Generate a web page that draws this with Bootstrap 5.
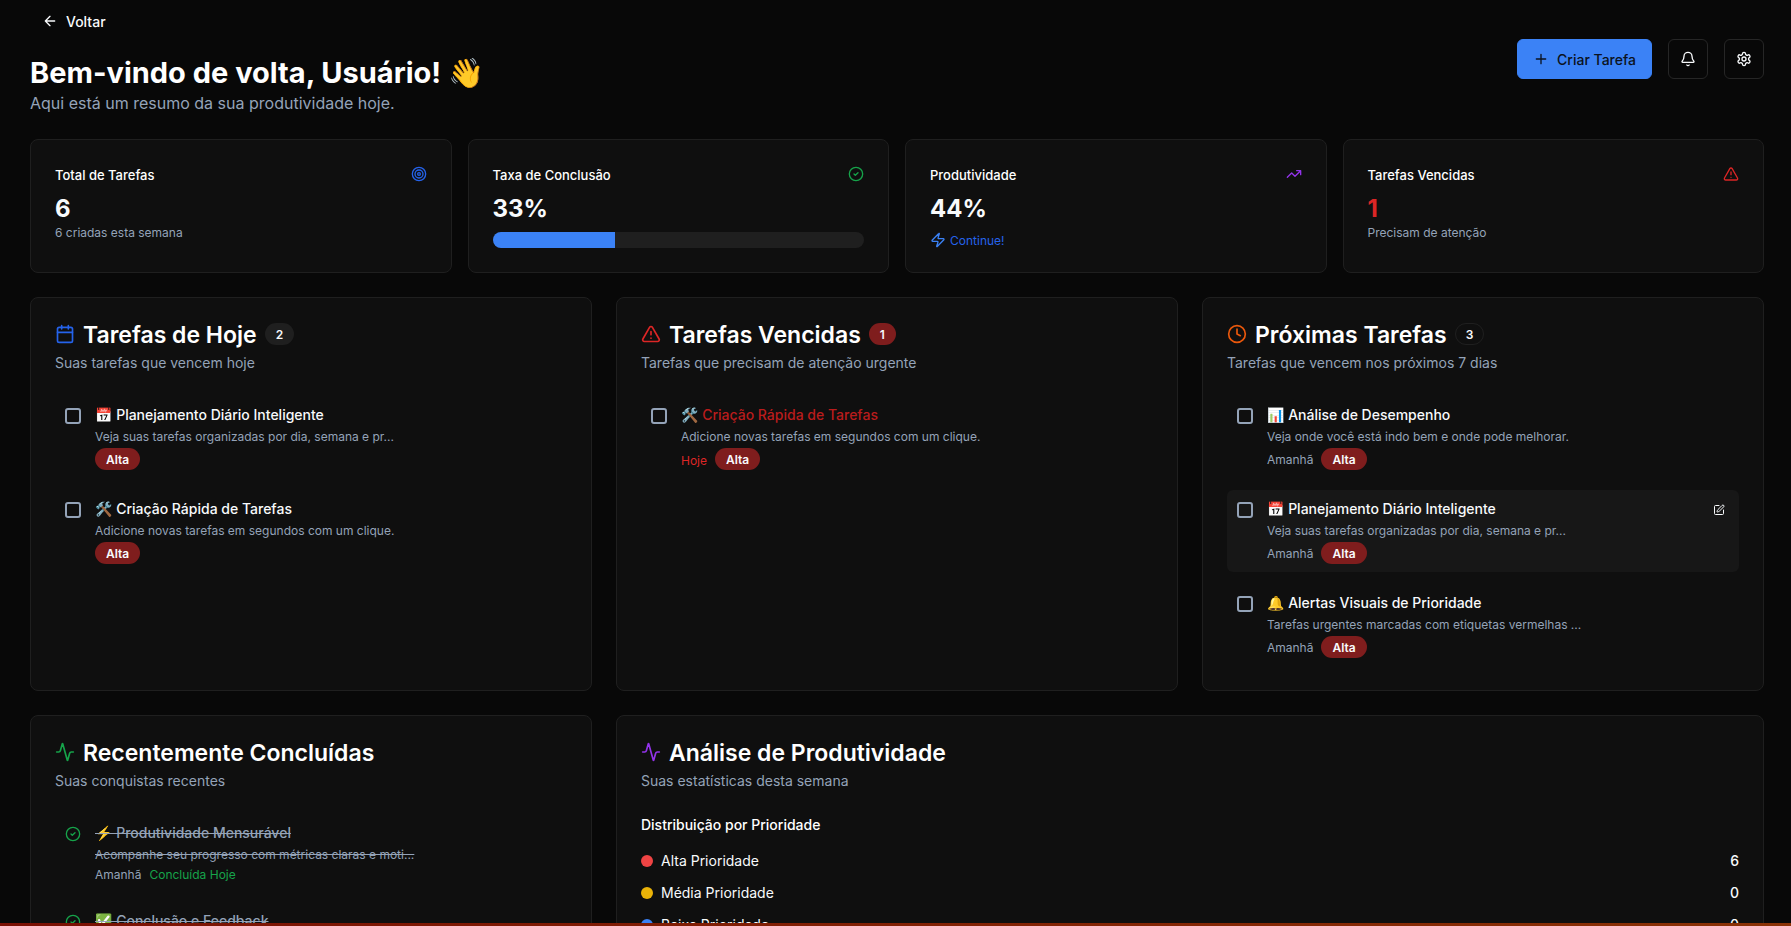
<!DOCTYPE html>
<html lang="pt-BR" data-bs-theme="dark">
<head>
<meta charset="utf-8">
<meta name="viewport" content="width=device-width, initial-scale=1">
<title>Painel de produtividade</title>
<link href="https://cdn.jsdelivr.net/npm/bootstrap@5.3.0/dist/css/bootstrap.min.css" rel="stylesheet">
<style>
  :root {
    --ink: #f8fafc; --muted: #94a3b8; --panel: #0f0f0f; --line: #1f1f1f;
    --blue: #2563eb; --green: #16a34a; --purple: #9333ea; --red: #dc2626; --orange: #ea580c;
  }
  body {
    font-family: Inter, "Noto Color Emoji", sans-serif;
    font-size: 14px; line-height: 22px;
    color: var(--ink); background: #080808;
    height: 100vh; overflow: hidden;
  }
  .page { padding: 3px 27px 24px 30px; }
  .ico { width: 16px; height: 16px; flex: none; fill: none; stroke: currentColor; stroke-width: 2; stroke-linecap: round; stroke-linejoin: round; }
  .ico-lg { width: 20px; height: 20px; }
  .ico-sm { width: 12px; height: 12px; }
  .tone-muted { color: var(--muted); }
  .tone-blue { color: var(--blue); }
  .tone-sky { color: #3b82f6; }
  .tone-green { color: var(--green); }
  .tone-purple { color: var(--purple); }
  .tone-red { color: var(--red); }
  .tone-orange { color: var(--orange); }
  .tone-late { color: #b91c1c; }

  .btn { --bs-btn-font-size: 14px; --bs-btn-line-height: 20px; --bs-btn-border-radius: 6px; --bs-btn-font-weight: 500; }
  .btn-back, .btn-create { padding-top: 8px; padding-bottom: 6px; }
  .btn-back .ico, .btn-create .ico { margin-bottom: 2px; }
  .btn-back { --bs-btn-color: var(--ink); --bs-btn-padding-x: 11px; height: 36px; }
  .btn-create { --bs-btn-bg: #3b82f6; --bs-btn-border-color: #3b82f6; --bs-btn-color: #0b1220; --bs-btn-padding-x: 15px; height: 40px; }
  .btn-square { --bs-btn-color: var(--ink); --bs-btn-border-color: #262626; --bs-btn-padding-x: 0; width: 40px; height: 40px; }
  .btn-edit { --bs-btn-color: var(--ink); --bs-btn-padding-x: 0; --bs-btn-padding-y: 0; width: 24px; height: 24px; }

  h1 { font-size: 29px; line-height: 36px; font-weight: 700; }
  .intro { font-size: 16px; line-height: 24px; }
  .panel { --bs-card-bg: var(--panel); --bs-card-border-color: var(--line); --bs-card-border-radius: 8px; --bs-card-color: var(--ink); --bs-card-spacer-x: 24px; --bs-card-spacer-y: 24px; }
  .stat-head { display: flex; justify-content: space-between; align-items: flex-start; margin-bottom: 6px; }
  .stat-head .ico { margin-top: 2px; }
  .stat-title { font-size: 13px; line-height: 22px; font-weight: 500; margin: 0; }
  .stat-value { font-size: 24px; line-height: 34px; font-weight: 700; }
  .stat-extra { margin-top: 6px; }
  .note { font-size: 12px; line-height: 18px; }
  .stat-note { font-size: 12px; line-height: 14px; }
  .progress { --bs-progress-height: 16px; --bs-progress-bg: #1f1f1f; --bs-progress-border-radius: 8px; --bs-progress-bar-bg: #3b82f6; }
  .panel-head { display: grid; gap: 4px; margin-bottom: 22px; }
  .panel-head .ico { margin-top: 2px; }
  .panel-head .pill { margin-top: 1px; }
  .panel-title { font-size: 23px; line-height: 26px; font-weight: 600; margin: 0; }
  .group-title { font-size: 14px; line-height: 22px; font-weight: 500; margin: 0 0 14px; }
  .pill { font-size: 12px; line-height: 16px; font-weight: 600; padding: 3px 10px 1px; border: 1px solid transparent; border-radius: 11px; }
  .pill-red { background: #7f1d1d; }
  .pill-gray { background: #1f1f1f; }
  .pill-line { border-color: var(--line); }

  .stack { display: grid; gap: 12px; }
  .stack-tight { display: grid; gap: 10px; }
  .task { display: flex; gap: 12px; padding: 8px; border-radius: 6px; }
  .task-active { background: #171717; }
  .task-body { display: grid; gap: 2px; flex: 1; min-width: 0; }
  .task-mark { width: 20px; height: 24px; padding-top: 4px; display: flex; justify-content: center; flex: none; }
  .task-mark .form-check-input { width: 16px; height: 16px; margin: 0; background-color: transparent; border: 2px solid var(--muted); border-radius: 3px; }
  .task-name { font-weight: 500; }
  .dot { width: 12px; height: 12px; border-radius: 50%; }
  .edge { height: 3px; background: linear-gradient(90deg, #7a1004, #8a3206); }
</style>
</head>
<body>
<svg class="d-none" aria-hidden="true">
  <symbol id="arrow" viewBox="0 0 24 24"><path d="m12 19-7-7 7-7M19 12H5"/></symbol>
  <symbol id="plus" viewBox="0 0 24 24"><path d="M5 12h14M12 5v14"/></symbol>
  <symbol id="bell" viewBox="0 0 24 24"><path d="M10.268 21a2 2 0 0 0 3.464 0M3.262 15.326A1 1 0 0 0 4 17h16a1 1 0 0 0 .74-1.673C19.41 13.956 18 12.499 18 8A6 6 0 0 0 6 8c0 4.499-1.411 5.956-2.738 7.326"/></symbol>
  <symbol id="gear" viewBox="0 0 24 24"><path d="M12.22 2h-.44a2 2 0 0 0-2 2v.18a2 2 0 0 1-1 1.73l-.43.25a2 2 0 0 1-2 0l-.15-.08a2 2 0 0 0-2.73.73l-.22.38a2 2 0 0 0 .73 2.73l.15.1a2 2 0 0 1 1 1.72v.51a2 2 0 0 1-1 1.74l-.15.09a2 2 0 0 0-.73 2.73l.22.38a2 2 0 0 0 2.73.73l.15-.08a2 2 0 0 1 2 0l.43.25a2 2 0 0 1 1 1.73V20a2 2 0 0 0 2 2h.44a2 2 0 0 0 2-2v-.18a2 2 0 0 1 1-1.73l.43-.25a2 2 0 0 1 2 0l.15.08a2 2 0 0 0 2.73-.73l.22-.39a2 2 0 0 0-.73-2.73l-.15-.08a2 2 0 0 1-1-1.74v-.5a2 2 0 0 1 1-1.74l.15-.09a2 2 0 0 0 .73-2.73l-.22-.38a2 2 0 0 0-2.73-.73l-.15.08a2 2 0 0 1-2 0l-.43-.25a2 2 0 0 1-1-1.73V4a2 2 0 0 0-2-2z"/><circle cx="12" cy="12" r="3"/></symbol>
  <symbol id="target" viewBox="0 0 24 24"><circle cx="12" cy="12" r="10"/><circle cx="12" cy="12" r="6"/><circle cx="12" cy="12" r="2"/></symbol>
  <symbol id="check" viewBox="0 0 24 24"><circle cx="12" cy="12" r="10"/><path d="m9 12 2 2 4-4"/></symbol>
  <symbol id="trend" viewBox="0 0 24 24"><path d="M22 7l-8.500 8.500-5-5L2 17M16 7h6v6"/></symbol>
  <symbol id="alert" viewBox="0 0 24 24"><path d="m21.73 18-8-14a2 2 0 0 0-3.480 0l-8 14A2 2 0 0 0 4 21h16a2 2 0 0 0 1.730-3M12 9v4M12 17h.01"/></symbol>
  <symbol id="zap" viewBox="0 0 24 24"><path d="M4 14a1 1 0 0 1-.78-1.630l9.900-10.200a.5.5 0 0 1 .86.46l-1.920 6.020A1 1 0 0 0 13 10h7a1 1 0 0 1 .78 1.630l-9.900 10.200a.5.5 0 0 1-.86-.46l1.920-6.020A1 1 0 0 0 11 14z"/></symbol>
  <symbol id="calendar" viewBox="0 0 24 24"><path d="M8 2v4M16 2v4M3 10h18"/><rect x="3" y="4" width="18" height="18" rx="2"/></symbol>
  <symbol id="clock" viewBox="0 0 24 24"><circle cx="12" cy="12" r="10"/><path d="M12 6v6l4 2"/></symbol>
  <symbol id="pulse" viewBox="0 0 24 24"><path d="M22 12h-2.480a2 2 0 0 0-1.930 1.460l-2.350 8.360a.25.25 0 0 1-.48 0L9.240 2.180a.25.25 0 0 0-.48 0l-2.350 8.360A2 2 0 0 1 4.490 12H2"/></symbol>
  <symbol id="edit" viewBox="0 0 24 24"><path d="M12 3H5a2 2 0 0 0-2 2v14a2 2 0 0 0 2 2h14a2 2 0 0 0 2-2v-7M18.375 2.625a1 1 0 0 1 3 3l-9.013 9.014a2 2 0 0 1-.853.505l-2.873.84a.5.5 0 0 1-.62-.62l.84-2.873a2 2 0 0 1 .506-.852z"/></symbol>
</svg>

<main class="page container-fluid">
  <header class="d-flex justify-content-between align-items-center mb-4">
    <div>
      <button type="button" class="btn btn-back d-inline-flex align-items-center gap-2 mb-3"><svg class="ico"><use href="#arrow"/></svg>Voltar</button>
      <h1 class="m-0">Bem-vindo de volta, Usuário! 👋</h1>
      <p class="intro tone-muted m-0">Aqui está um resumo da sua produtividade hoje.</p>
    </div>
    <div class="d-flex gap-3">
      <button type="button" class="btn btn-create d-inline-flex align-items-center gap-2"><svg class="ico"><use href="#plus"/></svg>Criar Tarefa</button>
      <button type="button" class="btn btn-square d-inline-flex align-items-center justify-content-center" aria-label="Notificações"><svg class="ico"><use href="#bell"/></svg></button>
      <button type="button" class="btn btn-square d-inline-flex align-items-center justify-content-center" aria-label="Configurações"><svg class="ico"><use href="#gear"/></svg></button>
    </div>
  </header>

  <section class="row gx-3 mb-4">
    <div class="col-3"><div class="card panel h-100"><div class="card-body">
      <div class="stat-head"><h2 class="stat-title">Total de Tarefas</h2><svg class="ico tone-blue"><use href="#target"/></svg></div>
      <div class="stat-value">6</div>
      <p class="stat-note tone-muted m-0">6 criadas esta semana</p>
    </div></div></div>
    <div class="col-3"><div class="card panel h-100"><div class="card-body">
      <div class="stat-head"><h2 class="stat-title">Taxa de Conclusão</h2><svg class="ico tone-green"><use href="#check"/></svg></div>
      <div class="stat-value">33%</div>
      <div class="progress stat-extra" role="progressbar" aria-label="Taxa de conclusão" aria-valuenow="33" aria-valuemin="0" aria-valuemax="100"><div class="progress-bar" style="width: 33%"></div></div>
    </div></div></div>
    <div class="col-3"><div class="card panel h-100"><div class="card-body pb-0">
      <div class="stat-head"><h2 class="stat-title">Produtividade</h2><svg class="ico tone-purple"><use href="#trend"/></svg></div>
      <div class="stat-value">44%</div>
      <div class="note stat-extra tone-blue d-flex align-items-start gap-1"><svg class="ico tone-sky"><use href="#zap"/></svg>Continue!</div>
    </div></div></div>
    <div class="col-3"><div class="card panel h-100"><div class="card-body">
      <div class="stat-head"><h2 class="stat-title">Tarefas Vencidas</h2><svg class="ico tone-red"><use href="#alert"/></svg></div>
      <div class="stat-value tone-red">1</div>
      <p class="stat-note tone-muted m-0">Precisam de atenção</p>
    </div></div></div>
  </section>

  <section class="row gx-4 mb-4">
    <div class="col-4"><div class="card panel h-100"><div class="card-body">
      <div class="panel-head">
        <div class="d-flex align-items-start gap-2"><svg class="ico ico-lg tone-blue"><use href="#calendar"/></svg><h2 class="panel-title">Tarefas de Hoje</h2><span class="pill pill-gray">2</span></div>
        <p class="tone-muted m-0">Suas tarefas que vencem hoje</p>
      </div>
      <div class="stack">
        <div class="task">
          <div class="task-mark"><input class="form-check-input" type="checkbox" id="t1"></div>
          <div class="task-body"><label class="task-name" for="t1">📅 Planejamento Diário Inteligente</label><div class="note tone-muted">Veja suas tarefas organizadas por dia, semana e pr...</div><div class="d-flex align-items-center gap-2"><span class="pill pill-red">Alta</span></div></div>
        </div>
        <div class="task">
          <div class="task-mark"><input class="form-check-input" type="checkbox" id="t2"></div>
          <div class="task-body"><label class="task-name" for="t2">🛠️ Criação Rápida de Tarefas</label><div class="note tone-muted">Adicione novas tarefas em segundos com um clique.</div><div class="d-flex align-items-center gap-2"><span class="pill pill-red">Alta</span></div></div>
        </div>
      </div>
    </div></div></div>

    <div class="col-4"><div class="card panel h-100"><div class="card-body">
      <div class="panel-head">
        <div class="d-flex align-items-start gap-2"><svg class="ico ico-lg tone-red"><use href="#alert"/></svg><h2 class="panel-title">Tarefas Vencidas</h2><span class="pill pill-red">1</span></div>
        <p class="tone-muted m-0">Tarefas que precisam de atenção urgente</p>
      </div>
      <div class="stack">
        <div class="task">
          <div class="task-mark"><input class="form-check-input" type="checkbox" id="t3"></div>
          <div class="task-body"><label class="task-name tone-late" for="t3">🛠️ Criação Rápida de Tarefas</label><div class="note tone-muted">Adicione novas tarefas em segundos com um clique.</div><div class="d-flex align-items-end gap-2"><span class="note tone-red">Hoje</span><span class="pill pill-red">Alta</span></div></div>
        </div>
      </div>
    </div></div></div>

    <div class="col-4"><div class="card panel h-100"><div class="card-body">
      <div class="panel-head">
        <div class="d-flex align-items-start gap-2"><svg class="ico ico-lg tone-orange"><use href="#clock"/></svg><h2 class="panel-title">Próximas Tarefas</h2><span class="pill pill-line">3</span></div>
        <p class="tone-muted m-0">Tarefas que vencem nos próximos 7 dias</p>
      </div>
      <div class="stack">
        <div class="task">
          <div class="task-mark"><input class="form-check-input" type="checkbox" id="t4"></div>
          <div class="task-body"><label class="task-name" for="t4">📊 Análise de Desempenho</label><div class="note tone-muted">Veja onde você está indo bem e onde pode melhorar.</div><div class="d-flex align-items-baseline gap-2"><span class="note tone-muted">Amanhã</span><span class="pill pill-red">Alta</span></div></div>
        </div>
        <div class="task task-active">
          <div class="task-mark"><input class="form-check-input" type="checkbox" id="t5"></div>
          <div class="task-body"><label class="task-name" for="t5">📅 Planejamento Diário Inteligente</label><div class="note tone-muted">Veja suas tarefas organizadas por dia, semana e pr...</div><div class="d-flex align-items-baseline gap-2"><span class="note tone-muted">Amanhã</span><span class="pill pill-red">Alta</span></div></div>
          <button type="button" class="btn btn-edit d-inline-flex align-items-center justify-content-center" aria-label="Editar tarefa"><svg class="ico ico-sm"><use href="#edit"/></svg></button>
        </div>
        <div class="task">
          <div class="task-mark"><input class="form-check-input" type="checkbox" id="t6"></div>
          <div class="task-body"><label class="task-name" for="t6">🔔 Alertas Visuais de Prioridade</label><div class="note tone-muted">Tarefas urgentes marcadas com etiquetas vermelhas ...</div><div class="d-flex align-items-baseline gap-2"><span class="note tone-muted">Amanhã</span><span class="pill pill-red">Alta</span></div></div>
        </div>
      </div>
    </div></div></div>
  </section>

  <section class="row gx-4">
    <div class="col-4"><div class="card panel h-100"><div class="card-body">
      <div class="panel-head">
        <div class="d-flex align-items-start gap-2"><svg class="ico ico-lg tone-green"><use href="#pulse"/></svg><h2 class="panel-title">Recentemente Concluídas</h2></div>
        <p class="tone-muted m-0">Suas conquistas recentes</p>
      </div>
      <div class="stack-tight">
        <div class="task">
          <div class="task-mark tone-green"><svg class="ico"><use href="#check"/></svg></div>
          <div class="task-body"><div class="task-name tone-muted"><s>⚡ Produtividade Mensurável</s></div><div class="note tone-muted"><s>Acompanhe seu progresso com métricas claras e moti...</s></div><div class="note d-flex gap-2"><span class="tone-muted">Amanhã</span><span class="tone-green">Concluída Hoje</span></div></div>
        </div>
        <div class="task">
          <div class="task-mark tone-green"><svg class="ico"><use href="#check"/></svg></div>
          <div class="task-body"><div class="task-name tone-muted"><s>✅ Conclusão e Feedback</s></div></div>
        </div>
      </div>
    </div></div></div>

    <div class="col-8"><div class="card panel h-100"><div class="card-body">
      <div class="panel-head">
        <div class="d-flex align-items-start gap-2"><svg class="ico ico-lg tone-purple"><use href="#pulse"/></svg><h2 class="panel-title">Análise de Produtividade</h2></div>
        <p class="tone-muted m-0">Suas estatísticas desta semana</p>
      </div>
      <h3 class="group-title">Distribuição por Prioridade</h3>
      <div class="stack-tight">
        <div class="d-flex align-items-center gap-2"><span class="dot" style="background: #ef4444"></span><span>Alta Prioridade</span><span class="ms-auto fw-medium">6</span></div>
        <div class="d-flex align-items-center gap-2"><span class="dot" style="background: #eab308"></span><span>Média Prioridade</span><span class="ms-auto fw-medium">0</span></div>
        <div class="d-flex align-items-center gap-2"><span class="dot" style="background: #3b82f6"></span><span>Baixa Prioridade</span><span class="ms-auto fw-medium">0</span></div>
      </div>
    </div></div></div>
  </section>
</main>
<div class="edge fixed-bottom"></div>
<script src="https://cdn.jsdelivr.net/npm/bootstrap@5.3.0/dist/js/bootstrap.bundle.min.js"></script>
</body>
</html>
